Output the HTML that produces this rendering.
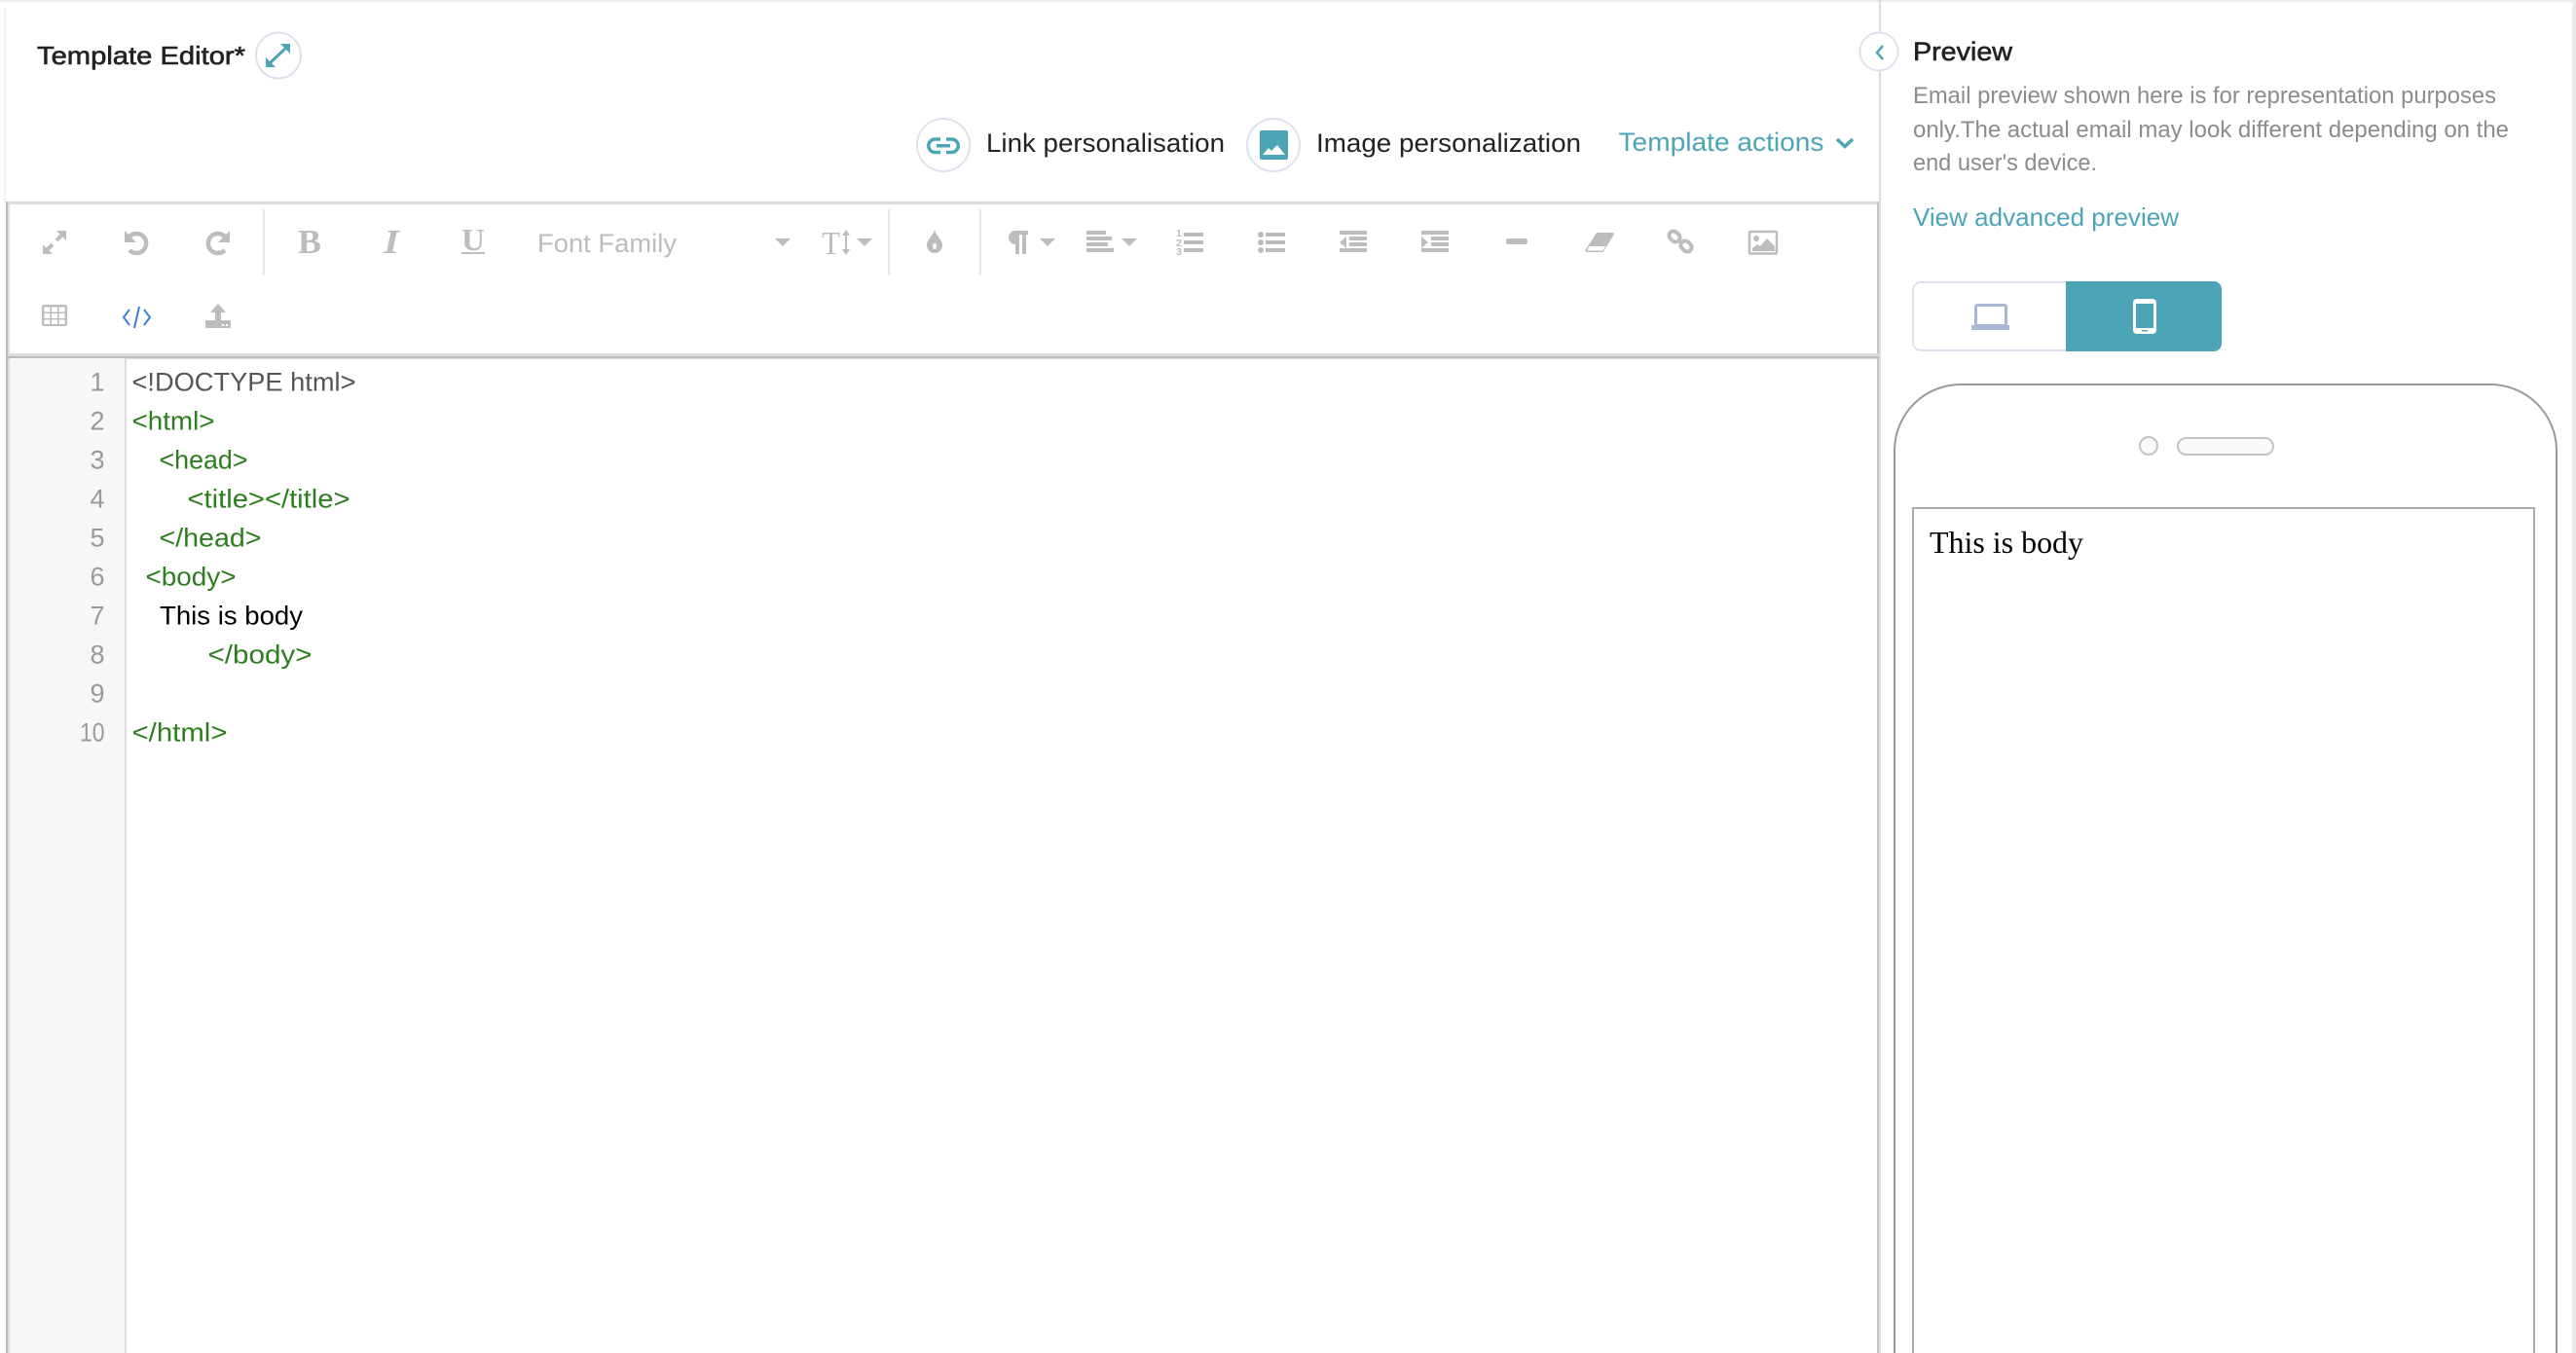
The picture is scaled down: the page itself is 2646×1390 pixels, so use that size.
<!DOCTYPE html>
<html>
<head>
<meta charset="utf-8">
<title>Template Editor</title>
<style>
html,body{margin:0;padding:0;background:#fff;width:2646px;height:1390px;overflow:hidden}
svg{display:block;position:absolute;left:0;top:0}
text{font-family:"Liberation Sans",sans-serif}
.serif{font-family:"Liberation Serif",serif}
.g{fill:#2e7d20;font-size:27px}
.n{fill:#999;font-size:27px}
.d{fill:#8c8c8c;font-size:24px}
.t{fill:#4ba5b6}
.k{fill:#222}
.i{fill:#bdbdbd}
.s{fill:none;stroke:#bdbdbd}
</style>
</head>
<body>
<svg width="2646" height="1390" viewBox="0 0 2646 1390" xmlns="http://www.w3.org/2000/svg">
<!-- page frame -->
<rect width="2646" height="2" fill="#eeeeee"/>
<rect x="2642" y="0" width="2" height="1390" fill="#e9edf4"/>
<rect x="2644" y="0" width="2" height="1390" fill="#e8e8e8"/>
<rect x="4" y="8" width="2" height="200" fill="#f0f1f6"/>

<!-- title -->
<text x="38" y="66" font-size="26" class="k" stroke="#222" stroke-width=".6" textLength="214" lengthAdjust="spacingAndGlyphs">Template Editor*</text>
<ellipse cx="286" cy="57" rx="23" ry="23.5" fill="#fff" stroke="#dde2ee" stroke-width="2"/>
<path d="M273 69V59L283 69ZM298 45V55L288 45Z" fill="#4ba5b6"/>
<path d="M277 65L294 49" stroke="#4ba5b6" stroke-width="3" fill="none"/>

<!-- action row -->
<circle cx="969" cy="149" r="27" fill="#fff" stroke="#dde2ee" stroke-width="2"/>
<path d="M966 143H960.5a6.75 6.75 0 0 0 0 13.5H966M972 143H977.5a6.75 6.75 0 0 1 0 13.5H972M962 149.7H976" fill="none" stroke="#4ba5b6" stroke-width="3.5"/>
<text x="1013" y="156" font-size="26.5" class="k" textLength="245" lengthAdjust="spacingAndGlyphs">Link personalisation</text>
<circle cx="1308" cy="149" r="27" fill="#fff" stroke="#dde2ee" stroke-width="2"/>
<rect x="1294" y="134" width="29" height="30" rx="2" fill="#4ba5b6"/>
<path d="M1297 159L1303 152L1306 155L1312 149L1320 159Z" fill="#fff"/>
<text x="1352" y="156" font-size="26.5" class="k" textLength="272" lengthAdjust="spacingAndGlyphs">Image personalization</text>
<text x="1662.500" y="155" font-size="27" class="t" textLength="211" lengthAdjust="spacingAndGlyphs">Template actions</text>
<path d="M1887 143L1895 150.500L1903 143" fill="none" stroke="#4ba5b6" stroke-width="3.500"/>

<!-- editor frame -->
<rect x="6" y="207" width="2" height="1183" fill="#bdbdbd"/>
<rect x="8" y="207" width="1922" height="3" fill="#dddddd"/>
<rect x="8" y="210" width="2" height="1180" fill="#dddddd"/>
<rect x="1928" y="207" width="2" height="1183" fill="#c8c8c8"/>
<rect x="1930" y="0" width="2" height="1390" fill="#dddddd"/>
<rect x="8" y="363" width="1922" height="3" fill="#dcdcdc"/>
<rect x="8" y="366" width="1922" height="2.500" fill="#bcbcbc"/>
<rect x="10" y="368" width="118" height="1022" fill="#f7f7f7"/>
<rect x="128" y="368" width="2" height="1022" fill="#dddddd"/>

<!-- toolbar row 1 -->
<path d="M68 237V247L58 237ZM44 261V251L54 261Z" class="i"/>
<path d="M49 256L54 251M58 247L63 242" stroke="#bdbdbd" stroke-width="4" fill="none"/>
<path d="M128 237V249H140Z" class="i"/>
<path d="M133 243A10 10 0 1 1 133 257" class="s" stroke-width="4.500"/>
<path d="M236 237V249H224Z" class="i"/>
<path d="M231 243A10 10 0 1 0 231 257" class="s" stroke-width="4.500"/>
<rect x="270" y="215" width="2" height="68" fill="#e8e8e8"/>
<text x="306" y="260" font-size="35" font-weight="700" class="i serif" textLength="24" lengthAdjust="spacingAndGlyphs">B</text>
<text x="394" y="260" font-size="35" font-weight="700" font-style="italic" class="i serif" textLength="16" lengthAdjust="spacingAndGlyphs">I</text>
<text x="474" y="257" font-size="32" font-weight="700" class="i serif" textLength="24" lengthAdjust="spacingAndGlyphs">U</text>
<rect x="474" y="259" width="24" height="2" class="i"/>
<text x="552" y="259" font-size="27" class="i" textLength="143" lengthAdjust="spacingAndGlyphs">Font Family</text>
<path d="M796 245H812L804 253Z" class="i"/>
<text x="844" y="261" font-size="34" class="i serif" textLength="19" lengthAdjust="spacingAndGlyphs">T</text>
<path d="M869 241V257" stroke="#bdbdbd" stroke-width="2"/>
<path d="M865 242L869 236L873 242ZM865 256L869 262L873 256Z" class="i"/>
<path d="M880 245H896L888 253Z" class="i"/>
<rect x="912" y="215" width="2" height="68" fill="#e8e8e8"/>
<path d="M960 236C962 243 968 246 968 252A8 8 0 0 1 952 252C952 246 958 243 960 236Z" class="i"/>
<ellipse cx="960" cy="253" rx="2" ry="3" fill="#fff"/>
<rect x="1006" y="215" width="2" height="68" fill="#e8e8e8"/>
<path d="M1043 237H1056V241H1054V261H1050V241H1047V261H1043V251A7 7 0 0 1 1043 237Z" class="i"/>
<path d="M1068 245H1084L1076 253Z" class="i"/>
<path d="M1116 237H1136V241H1116ZM1116 243H1142V247H1116ZM1116 249H1138V253H1116ZM1116 255H1144V259H1116Z" class="i"/>
<path d="M1152 245H1168L1160 253Z" class="i"/>
<path d="M1216 239H1236V243H1216ZM1216 247H1236V251H1216ZM1216 255H1236V259H1216Z" class="i"/>
<text x="1208" y="243" font-size="10" font-weight="700" class="i" textLength="6" lengthAdjust="spacingAndGlyphs">1</text>
<text x="1208" y="253" font-size="10" font-weight="700" class="i" textLength="6" lengthAdjust="spacingAndGlyphs">2</text>
<text x="1208" y="262" font-size="10" font-weight="700" class="i" textLength="6" lengthAdjust="spacingAndGlyphs">3</text>
<circle cx="1295" cy="241" r="3" class="i"/><circle cx="1295" cy="249" r="3" class="i"/><circle cx="1295" cy="257" r="3" class="i"/>
<path d="M1300 239H1320V243H1300ZM1300 247H1320V251H1300ZM1300 255H1320V259H1300Z" class="i"/>
<path d="M1376 237H1404V241H1376ZM1386 243H1404V247H1386ZM1386 249H1404V253H1386ZM1376 255H1404V259H1376ZM1383 243V255L1376 249Z" class="i"/>
<path d="M1460 237H1488V241H1460ZM1470 243H1488V247H1470ZM1470 249H1488V253H1470ZM1460 255H1488V259H1460ZM1460 243V255L1467 249Z" class="i"/>
<rect x="1547" y="245" width="22" height="6" rx="2" class="i"/>
<path d="M1640 239H1656Q1659 239 1657.500 241.500L1648 257Q1647 259 1645 259H1631Q1627 259 1629 256Z" class="i"/>
<path d="M1632 253H1649.500L1646 257.500H1630.500Z" fill="#fff"/>
<g fill="none" stroke="#bdbdbd" stroke-width="4">
<rect x="-6" y="-4.500" width="12" height="9" rx="4.500" transform="translate(1720 243) rotate(45)"/>
<rect x="-6" y="-4.500" width="12" height="9" rx="4.500" transform="translate(1732 253) rotate(45)"/>
</g>
<rect x="1797" y="238" width="28" height="22.500" rx="1" fill="#fff" stroke="#bdbdbd" stroke-width="2.500"/>
<circle cx="1804" cy="245" r="3" class="i"/>
<path d="M1800 258V255L1805 251L1808 253L1815 245L1823 253V258Z" class="i"/>

<!-- toolbar row 2 -->
<rect x="43" y="313" width="26" height="22" rx="2" class="i"/>
<g fill="#fff">
<rect x="45.500" y="315.500" width="6" height="5"/><rect x="53" y="315.500" width="6" height="5"/><rect x="60.500" y="315.500" width="6" height="5"/>
<rect x="45.500" y="322" width="6" height="5"/><rect x="53" y="322" width="6" height="5"/><rect x="60.500" y="322" width="6" height="5"/>
<rect x="45.500" y="328.500" width="6" height="4.500"/><rect x="53" y="328.500" width="6" height="4.500"/><rect x="60.500" y="328.500" width="6" height="4.500"/>
</g>
<path d="M133 318L127 326L133 334M148 318L154 326L148 334M143 315L138 337" fill="none" stroke="#3b7de0" stroke-width="2"/>
<path d="M224 312L232 321H227V330H221V321H216Z" class="i"/>
<rect x="211" y="329" width="26" height="8" rx="1" class="i"/>
<rect x="228" y="333" width="2" height="2" fill="#fff"/><rect x="232" y="333" width="2" height="2" fill="#fff"/>

<!-- line numbers -->
<g text-anchor="end">
<text x="107.500" y="401.500" class="n">1</text>
<text x="107.500" y="441.500" class="n">2</text>
<text x="107.500" y="481.500" class="n">3</text>
<text x="107.500" y="521.500" class="n">4</text>
<text x="107.500" y="561.500" class="n">5</text>
<text x="107.500" y="601.500" class="n">6</text>
<text x="107.500" y="641.500" class="n">7</text>
<text x="107.500" y="681.500" class="n">8</text>
<text x="107.500" y="721.500" class="n">9</text>
<text x="82" y="761.500" class="n" text-anchor="start" textLength="25.500" lengthAdjust="spacingAndGlyphs">10</text>
</g>

<!-- code -->
<text x="135.500" y="401.500" font-size="27" fill="#555" textLength="230" lengthAdjust="spacingAndGlyphs">&lt;!DOCTYPE html&gt;</text>
<text x="135.500" y="441.500" class="g" textLength="85" lengthAdjust="spacingAndGlyphs">&lt;html&gt;</text>
<text x="163.500" y="481.500" class="g" textLength="91" lengthAdjust="spacingAndGlyphs">&lt;head&gt;</text>
<text x="192.500" y="521.500" class="g" textLength="167" lengthAdjust="spacingAndGlyphs">&lt;title&gt;&lt;/title&gt;</text>
<text x="163.500" y="561.500" class="g" textLength="105" lengthAdjust="spacingAndGlyphs">&lt;/head&gt;</text>
<text x="149.500" y="601.500" class="g" textLength="93" lengthAdjust="spacingAndGlyphs">&lt;body&gt;</text>
<text x="164" y="641.500" font-size="27" fill="#000" textLength="147" lengthAdjust="spacingAndGlyphs">This is body</text>
<text x="213.500" y="681.500" class="g" textLength="107" lengthAdjust="spacingAndGlyphs">&lt;/body&gt;</text>
<text x="135.500" y="761.500" class="g" textLength="98" lengthAdjust="spacingAndGlyphs">&lt;/html&gt;</text>

<!-- preview panel -->
<circle cx="1930" cy="53" r="19.500" fill="#fff" stroke="#dde2ee" stroke-width="2"/>
<path d="M1934 47L1928 54L1934 61" fill="none" stroke="#4ba5b6" stroke-width="2.500"/>
<text x="1965" y="62" font-size="27" class="k" stroke="#222" stroke-width=".6" textLength="102" lengthAdjust="spacingAndGlyphs">Preview</text>
<text x="1965" y="106" class="d" textLength="599" lengthAdjust="spacingAndGlyphs">Email preview shown here is for representation purposes</text>
<text x="1965" y="141" class="d" textLength="612" lengthAdjust="spacingAndGlyphs">only.The actual email may look different depending on the</text>
<text x="1965" y="175" class="d" textLength="189" lengthAdjust="spacingAndGlyphs">end user's device.</text>
<text x="1965" y="232" font-size="26" class="t" textLength="273" lengthAdjust="spacingAndGlyphs">View advanced preview</text>

<!-- device toggle -->
<rect x="1965" y="290" width="316" height="70" rx="8" fill="#fff" stroke="#dde2ee" stroke-width="2"/>
<path d="M2122 289H2274a8 8 0 0 1 8 8V353a8 8 0 0 1 -8 8H2122Z" fill="#4ba5b6"/>
<rect x="2029.500" y="313.500" width="31" height="21" rx="1.500" fill="none" stroke="#abb7d6" stroke-width="3"/>
<rect x="2025" y="334" width="39" height="5" fill="#abb7d6"/>
<rect x="2191" y="307" width="24" height="36" rx="4" fill="#fff"/>
<rect x="2194" y="312" width="18" height="25" fill="#4ba5b6"/>
<rect x="2200" y="339" width="6" height="1.500" fill="#4ba5b6"/>

<!-- phone -->
<path d="M1946 1392V462A68 68 0 0 1 2014 395H2558A68 68 0 0 1 2626 462V1392" fill="none" stroke="#999" stroke-width="2"/>
<circle cx="2207" cy="458" r="9" fill="#fafafa" stroke="#c4c4c4" stroke-width="2"/>
<rect x="2237" y="450" width="98" height="17" rx="8.500" fill="#fafafa" stroke="#c4c4c4" stroke-width="2"/>
<path d="M1965 1392V522H2603V1392" fill="none" stroke="#aaa" stroke-width="2"/>
<text x="1982" y="568" font-size="32" fill="#000" class="serif" textLength="158" lengthAdjust="spacingAndGlyphs">This is body</text>
</svg>
</body>
</html>
